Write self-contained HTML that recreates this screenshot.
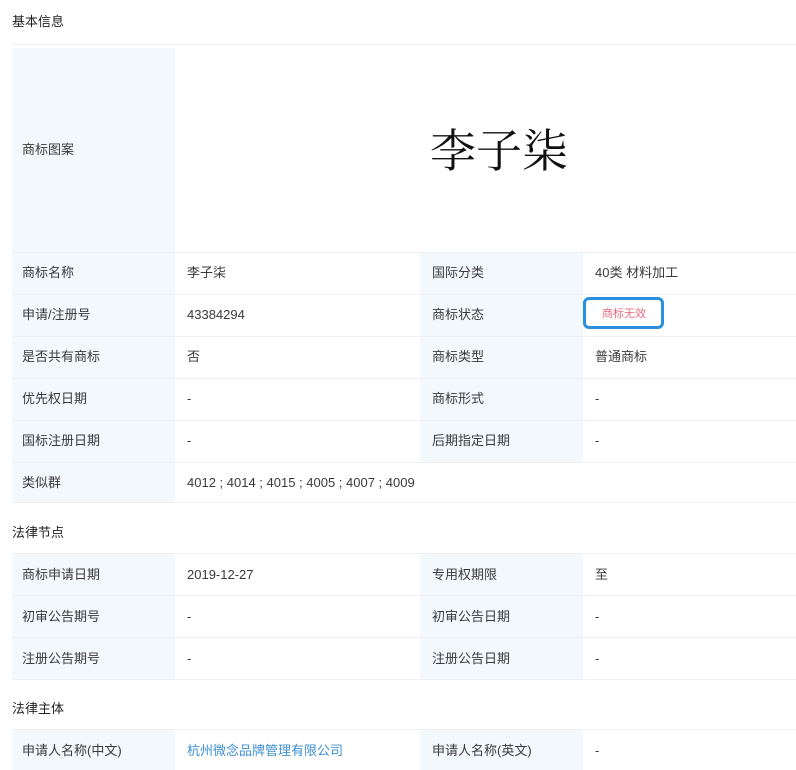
<!DOCTYPE html>
<html><head><meta charset="utf-8"><style>
body{margin:0;width:796px;height:770px;background:#fff;position:relative;overflow:hidden;font-family:"Liberation Sans","Noto Sans CJK SC",sans-serif;font-size:13px;color:#3a3a3a}
.a{position:absolute}
.lb{position:absolute;background:#f3f8fc}
.t{position:absolute;line-height:16px;white-space:nowrap}
.ln{position:absolute;height:1px;background:#eef0f3}
</style></head><body>
<div class="t" style="left:12px;top:14px;color:#222">基本信息</div>
<div class="ln" style="left:12px;top:44px;width:784px"></div>
<div class="lb" style="left:12px;top:48px;width:163px;height:454px"></div>
<div class="lb" style="left:420px;top:252px;width:163px;height:210px"></div>
<div class="t" style="left:430px;top:120px;font-size:46px;line-height:56px;font-family:'Noto Serif CJK SC',serif;color:#111">李子柒</div>
<div class="t" style="left:22px;top:142px">商标图案</div>
<div class="ln" style="left:12px;top:252px;width:784px"></div>
<div class="ln" style="left:12px;top:294px;width:784px"></div>
<div class="ln" style="left:12px;top:336px;width:784px"></div>
<div class="ln" style="left:12px;top:378px;width:784px"></div>
<div class="ln" style="left:12px;top:420px;width:784px"></div>
<div class="ln" style="left:12px;top:462px;width:784px"></div>
<div class="ln" style="left:12px;top:502px;width:784px"></div>

<div class="t" style="left:22px;top:265px">商标名称</div><div class="t" style="left:187px;top:265px">李子柒</div>
<div class="t" style="left:432px;top:265px">国际分类</div><div class="t" style="left:595px;top:265px">40类 材料加工</div>
<div class="t" style="left:22px;top:307px">申请/注册号</div><div class="t" style="left:187px;top:307px">43384294</div>
<div class="t" style="left:432px;top:307px">商标状态</div>
<div class="a" style="left:583px;top:297px;width:81px;height:32px;border:3px solid #2b8fe0;border-radius:6px;box-sizing:border-box;background:#fff"></div>
<div class="t" style="left:602px;top:306px;font-size:11px;color:#e86a80">商标无效</div>
<div class="t" style="left:22px;top:349px">是否共有商标</div><div class="t" style="left:187px;top:349px">否</div>
<div class="t" style="left:432px;top:349px">商标类型</div><div class="t" style="left:595px;top:349px">普通商标</div>
<div class="t" style="left:22px;top:391px">优先权日期</div><div class="t" style="left:187px;top:391px">-</div>
<div class="t" style="left:432px;top:391px">商标形式</div><div class="t" style="left:595px;top:391px">-</div>
<div class="t" style="left:22px;top:433px">国标注册日期</div><div class="t" style="left:187px;top:433px">-</div>
<div class="t" style="left:432px;top:433px">后期指定日期</div><div class="t" style="left:595px;top:433px">-</div>
<div class="t" style="left:22px;top:475px">类似群</div><div class="t" style="left:187px;top:475px">4012 ; 4014 ; 4015 ; 4005 ; 4007 ; 4009</div>

<div class="t" style="left:12px;top:525px;color:#222">法律节点</div>
<div class="lb" style="left:12px;top:553px;width:163px;height:126px"></div>
<div class="lb" style="left:420px;top:553px;width:163px;height:126px"></div>
<div class="ln" style="left:12px;top:553px;width:784px"></div>
<div class="ln" style="left:12px;top:595px;width:784px"></div>
<div class="ln" style="left:12px;top:637px;width:784px"></div>
<div class="ln" style="left:12px;top:679px;width:784px"></div>
<div class="t" style="left:22px;top:567px">商标申请日期</div><div class="t" style="left:187px;top:567px">2019-12-27</div>
<div class="t" style="left:432px;top:567px">专用权期限</div><div class="t" style="left:595px;top:567px">至</div>
<div class="t" style="left:22px;top:609px">初审公告期号</div><div class="t" style="left:187px;top:609px">-</div>
<div class="t" style="left:432px;top:609px">初审公告日期</div><div class="t" style="left:595px;top:609px">-</div>
<div class="t" style="left:22px;top:651px">注册公告期号</div><div class="t" style="left:187px;top:651px">-</div>
<div class="t" style="left:432px;top:651px">注册公告日期</div><div class="t" style="left:595px;top:651px">-</div>

<div class="t" style="left:12px;top:701px;color:#222">法律主体</div>
<div class="lb" style="left:12px;top:729px;width:163px;height:41px"></div>
<div class="lb" style="left:420px;top:729px;width:163px;height:41px"></div>
<div class="ln" style="left:12px;top:729px;width:784px"></div>
<div class="t" style="left:22px;top:743px">申请人名称(中文)</div><div class="t" style="left:187px;top:743px;color:#3d8fd0">杭州微念品牌管理有限公司</div>
<div class="t" style="left:432px;top:743px">申请人名称(英文)</div><div class="t" style="left:595px;top:743px">-</div>
</body></html>
